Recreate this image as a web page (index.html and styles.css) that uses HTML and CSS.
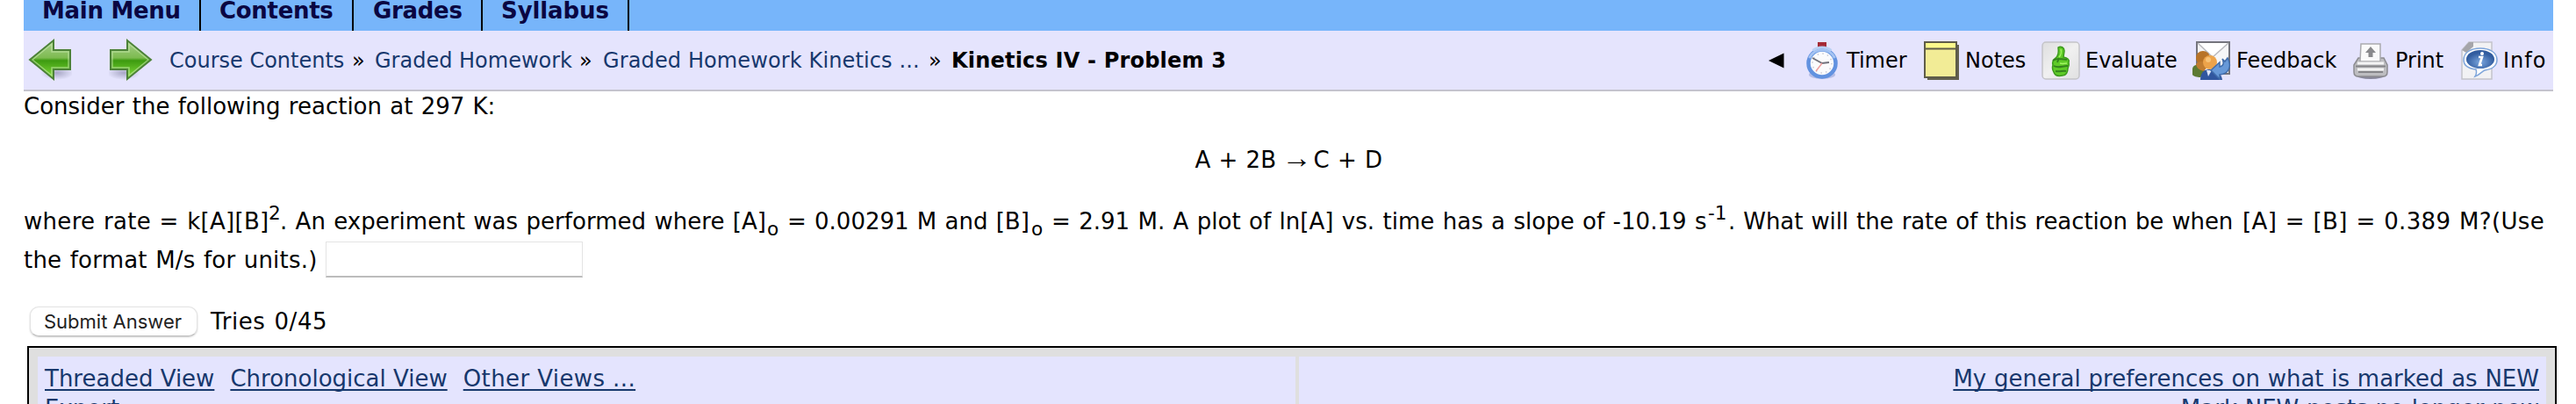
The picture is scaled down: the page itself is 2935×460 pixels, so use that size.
FILE: index.html
```
<!DOCTYPE html>
<html lang="en">
<head>
<meta charset="utf-8">
<title>Kinetics IV - Problem 3</title>
<link rel="stylesheet" href="styles.css">
</head>
<body>
<ul class="tabs">
  <li class="tab tab-menu">Main Menu</li>
  <li class="tab tab-contents">Contents</li>
  <li class="tab tab-grades">Grades</li>
  <li class="tab tab-syllabus">Syllabus</li>
</ul>
<nav class="bar">
  <div class="arrows">
    <svg width="50" height="52" viewBox="0 0 50 52">
      <defs>
        <linearGradient id="green" x1="0" y1="0" x2="0" y2="1">
          <stop offset="0" stop-color="#a9cf8e"/><stop offset=".45" stop-color="#7dbb50"/><stop offset=".52" stop-color="#3d9a10"/><stop offset="1" stop-color="#86e03c"/>
        </linearGradient>
        <radialGradient id="shade"><stop offset="0" stop-color="#777799" stop-opacity=".55"/><stop offset="1" stop-color="#777799" stop-opacity="0"/></radialGradient>
      </defs>
      <ellipse cx="33" cy="40" rx="19" ry="8" fill="url(#shade)"/>
      <path d="M2 25 29 3v11h19v22H29v11z" fill="url(#green)" stroke="#4c8238" stroke-width="2"/>
      <path d="M5 25 27 7v9h19v18H27v9z" fill="none" stroke="#c5e8a8" stroke-opacity=".6" stroke-width="1.5"/>
    </svg>
    <svg width="50" height="52" viewBox="0 0 50 52">
      <ellipse cx="17" cy="40" rx="19" ry="8" fill="url(#shade)"/>
      <path d="M48 25 21 3v11H2v22h19v11z" fill="url(#green)" stroke="#4c8238" stroke-width="2"/>
      <path d="M45 25 23 7v9H4v18h19v9z" fill="none" stroke="#c5e8a8" stroke-opacity=".6" stroke-width="1.5"/>
    </svg>
  </div>
  <div class="crumbs">
    <a class="crumb-course">Course Contents</a><span class="sep">»</span>
    <a class="crumb-hw">Graded Homework</a><span class="sep sep-2">»</span>
    <a class="crumb-kin">Graded Homework Kinetics ...</a><span class="sep">»</span>
    <b>Kinetics IV - Problem 3</b>
  </div>
  <div class="tools">
    <svg class="collapse" width="18" height="18" viewBox="0 0 18 18"><path d="M0 9 17.500 .5v17z"/></svg>
    <svg class="ico-timer" width="38" height="44" viewBox="0 0 38 44">
      <rect x="14" y="1" width="10" height="7" fill="#a52a35"/>
      <ellipse cx="19" cy="38" rx="15" ry="5" fill="#8795cf" opacity=".5"/>
      <circle cx="19" cy="25" r="15.500" fill="#fbfbfd" stroke="#6292e0" stroke-width="4.500"/>
      <path d="M8.500 10.500A18 18 0 0 1 29.500 10.500" fill="none" stroke="#b8d0f4" stroke-width="3"/>
      <path d="M4.500 19A16 16 0 0 1 33.500 19" fill="none" stroke="#a5c3f2" stroke-width="3"/>
      <circle cx="19" cy="25" r="11" fill="none" stroke="#c9c9d2" stroke-width="1.500" stroke-dasharray="1.500 4.260"/>
      <path d="M8 19 19 25l8-1" fill="none" stroke="#71717b" stroke-width="1.800"/>
      <path d="m19 25-7 9" stroke="#ee9c9c" stroke-width="1.500"/>
    </svg>
    <span class="t-timer">Timer</span>
    <svg class="ico-notes" width="40" height="44" viewBox="0 0 40 44">
      <path d="M4 4h36v40H4z" fill="#62604f"/>
      <rect x="1" y="1" width="36" height="40" fill="#f2ec96" stroke="#5e5c49" stroke-width="2"/>
      <path d="M2 2h34v6H2z" fill="#fcfa8c"/><path d="M1 8.500h36" stroke="#5e5c49" stroke-width="2"/>
    </svg>
    <span class="t-notes">Notes</span>
    <svg class="ico-eval" width="44" height="44" viewBox="0 0 44 44">
      <defs><linearGradient id="tile" x1="0" y1="0" x2="1" y2="1"><stop offset="0" stop-color="#dededf"/><stop offset=".5" stop-color="#f0f0f0"/><stop offset="1" stop-color="#e0e0e1"/></linearGradient></defs>
      <rect x="1" y="1" width="42" height="42" rx="4" fill="url(#tile)" stroke="#c4c4c8" stroke-width="1.500"/>
      <path d="M19 7c3-2 7 0 7 4l-1 7c5 1 7 3 6 6 1 3 0 5-1 7 0 4-2 8-6 8-5 1-9 0-10-4-2-3-2-5-1-8-1-4 0-6 3-8 3-2 4-5 3-12z" fill="#5fcb27" stroke="#3c9a1c" stroke-width="1.500"/>
      <path d="M13 22c4-3 9-2 16-1M14 28c5 3 10 0 16 0M16 34c5 1 9-1 12 0M20 19l-2 5" fill="none" stroke="#34831d" stroke-width="2"/>
      <path d="M22 9c1 3 0 7-2 9M21 25c3 1 5 0 8 0" fill="none" stroke="#a2f463" stroke-width="1.500"/>
    </svg>
    <span class="t-eval">Evaluate</span>
    <svg class="ico-feed" width="44" height="44" viewBox="0 0 44 44">
      <path d="M5 1h37v36H5z" fill="#f6f6f7" stroke="#74747c" stroke-width="2"/>
      <path d="m6 2 17 16L41 2" fill="#fff" stroke="#b9b9bd" stroke-width="1.500"/>
      <path d="M0 38V31c1-5 7-5 12-3l3 8-6 5c-4 0-8-1-9-3z" fill="#5c7a32"/>
      <circle cx="12" cy="19" r="8" fill="#b87327"/>
      <path d="M4 26c4-5 10-3 14 2l-5 6c-5-1-8-3-9-8z" fill="#c07c30"/>
      <path d="M9 44c0-8 4-12 10-12 8 0 14 4 15 12z" fill="#31579f"/><path d="m16 33 2 7 4-7z" fill="#dce5f8"/>
      <circle cx="20" cy="24" r="8" fill="#eca34a"/><circle cx="18" cy="21" r="3" fill="#f8c276"/>
      <path d="M21 33 31 24v5c5-1 5-5 3-9l3 3 3-4c5 9 2 18-9 19v5z" fill="#6799d8" stroke="#3f6cab" stroke-width="1.500"/>
    </svg>
    <span class="t-feed">Feedback</span>
    <svg class="ico-print" width="40" height="44" viewBox="0 0 40 44">
      <ellipse cx="20" cy="39" rx="16" ry="4" fill="#686878" opacity=".75"/>
      <path d="M6 19h29l4 8v8c0 3-2 5-5 5H6c-3 0-5-2-5-5v-8z" fill="#bdbdc0" stroke="#8c8c90" stroke-width="1.500"/>
      <path d="M9 3h22v20H8z" fill="#fafafa" stroke="#aaaaae" stroke-width="1.500"/>
      <path d="m20 6 6 7h-3.500v5h-5v-5H14z" fill="#89898c"/>
      <path d="M5 25h30M5 32h30" stroke="#f4f4f4" stroke-width="3"/>
      <path d="M3 28.500h34M6 35h28" stroke="#858588" stroke-width="2"/>
    </svg>
    <span class="t-print">Print</span>
    <svg class="ico-info" width="42" height="44" viewBox="0 0 42 44">
      <defs><radialGradient id="bubble" cx=".5" cy=".65"><stop offset="0" stop-color="#7ba7df"/><stop offset="1" stop-color="#315c9f"/></radialGradient></defs>
      <path d="M9 1h26v42H1V10z" fill="#f2f2f4" stroke="#c3c3ca" stroke-width="1.500"/><path d="m1 10 8-9h5v5L6 13z" fill="#a5a5aa"/>
      <path d="M22 8c11 0 19 5 19 13 0 7-6 11-14 12-3 1-5 5-11 7 2-3 2-5 1-8C8 31 3 27 3 21 3 13 11 8 22 8z" fill="#fff" stroke="#7ea5da" stroke-width="1.500"/>
      <ellipse cx="22" cy="20.500" rx="16" ry="10.500" fill="url(#bubble)"/>
      <circle cx="24" cy="14" r="2" fill="#fff"/><path d="M20 18h4l-3 9h3" fill="none" stroke="#fff" stroke-width="2.600"/>
    </svg>
    <span class="t-info">Info</span>
  </div>
</nav>
<main class="problem">
  <p class="intro">Consider the following reaction at 297 K:</p>
  <p class="equation"><span class="left">A + 2B</span><span class="arrow">→</span><span class="right">C + D</span></p>
  <p class="rate"><span class="r1">where rate = k[A][B]</span><sup class="two">2</sup><span class="r2">. An experiment was performed where [A]</span><sub>o</sub><span class="r3">= 0.00291 M and [B]</span><sub>o</sub><span class="r4">= 2.91 M. A plot of ln[A] vs. time has a slope of -10.19 s</span><sup class="inv">-1</sup><span class="r5">. What will the rate of this reaction be when</span><span class="r6">[A] = [B] = 0.389 M?(Use</span></p>
  <div class="answer"><span class="units">the format M/s for units.)</span><input class="field" type="text"></div>
  <div class="submit"><button class="send">Submit Answer</button><span class="tries">Tries 0/45</span></div>
</main>
<section class="discussion">
  <div class="cell views">
    <div class="links"><a>Threaded View</a><a>Chronological View</a><a class="other">Other Views ...</a></div>
    <div class="links"><a>Export</a></div>
  </div>
  <div class="cell prefs">
    <div class="links"><a>My general preferences on what is marked as NEW</a></div>
    <div class="links"><a>Mark NEW posts no longer new</a></div>
  </div>
</section>
</body>
</html>
```
FILE: styles.css
```
* { box-sizing: border-box; }
html { overflow: hidden; }
body { margin: 0; height: 460px; overflow: hidden; background: #fff; color: #000; font: 26px/34px "DejaVu Sans", Verdana, sans-serif; }
p, ul { margin: 0; padding: 0; }
svg { display: block; flex: none; }

.tabs { display: flex; list-style: none; width: 2882px; height: 35px; margin-left: 27px; background: #77b5fa; }
.tab { height: 35px; padding-left: 21px; border-right: 2px solid #000; font-weight: bold; line-height: 24px; color: #0a0642; letter-spacing: -.3px; white-space: nowrap; }
.tab-menu { width: 202px; }
.tab-contents { width: 174px; }
.tab-grades { width: 147px; padding-left: 22px; }
.tab-syllabus { width: 167px; letter-spacing: -.1px; }

.bar { display: flex; align-items: center; width: 2882px; height: 69px; margin-left: 27px; padding-left: 5px; border-bottom: 2px solid #c4c3ce; background: #e5e4fd; font-size: 24px; white-space: nowrap; }
.arrows { display: flex; gap: 42px; width: 161px; }
.crumbs { display: flex; flex: 1; }
.crumbs a { color: #17386d; }
.crumb-course { width: 208px; }
.crumb-hw { width: 233px; }
.crumb-kin { width: 371px; letter-spacing: .12px; }
.sep { width: 26px; }
.sep-2 { width: 27px; }
.crumbs b { letter-spacing: .2px; }
.tools { display: flex; align-items: center; }
.collapse { margin-right: 24px; }
.ico-timer { margin-right: 9px; }
.t-timer { width: 88px; }
.ico-notes { margin-right: 7px; }
.t-notes { width: 87px; }
.ico-eval { margin-right: 6px; }
.t-eval { width: 122px; }
.ico-feed { margin-right: 6px; }
.t-feed { width: 133px; }
.ico-print { margin-right: 8px; }
.t-print { width: 75px; }
.ico-info { margin-right: 6px; }
.t-info { width: 57px; letter-spacing: 1px; }

.problem { margin-left: 27px; white-space: nowrap; word-spacing: 1px; }
.equation { display: flex; justify-content: center; width: 2882px; height: 40px; margin-top: 24px; line-height: 40px; }
.left { width: 99px; }
.arrow { width: 36px; font-family: "Liberation Serif", serif; font-size: 34px; line-height: 36px; }
.right { width: 78px; }
.rate { display: flex; height: 44px; margin-top: 28px; line-height: 44px; }
.rate sup, .rate sub { font-size: 21.600px; line-height: 44px; vertical-align: baseline; }
.rate sup { margin-top: -9px; }
.rate sub { width: 23px; margin-top: 9px; }
.r1 { width: 279px; letter-spacing: .3px; }
.two { width: 13px; }
.r2 { width: 555px; letter-spacing: .04px; }
.r3 { width: 278px; }
.r4 { width: 748px; letter-spacing: .045px; }
.inv { width: 23px; }
.r5 { width: 586px; letter-spacing: -.1px; }
.r6 { letter-spacing: .36px; }
.answer { display: flex; height: 42px; margin-top: 1px; line-height: 42px; }
.units { width: 344px; letter-spacing: .2px; }
.field { width: 293px; height: 41px; border: 1px solid #e4e4e4; border-bottom: 2px solid #bcbcbc; background: #fff; }
.submit { display: flex; height: 34px; margin: 32px 0 0 7px; }
.send { width: 191px; height: 34px; padding: 0 2px 0 0; border: 1px solid #e3e3e3; border-bottom-color: #bdbdbd; border-radius: 10px; background: #fff; box-shadow: 0 1px 2px #ccc; color: #222; font: 22px Inter, sans-serif; word-spacing: 0; }
.tries { margin-left: 15px; letter-spacing: .6px; }

.discussion { display: flex; gap: 4px; width: 2882px; height: 80px; margin: 11px 0 0 31px; padding: 10px 10px 0; border: 2px solid #000; background: #dfdfdf; }
.cell { padding: 8px 8px 0; background: #e4e4fe; white-space: nowrap; }
.views { width: 1433px; }
.prefs { flex: 1; text-align: right; word-spacing: .5px; }
.links { height: 34px; line-height: 34px; }
.links a { margin-right: 18px; color: #17386d; text-decoration: underline; text-decoration-thickness: 2px; text-underline-offset: 3px; text-decoration-skip-ink: none; }
.links a:last-child { margin-right: 0; }
.links .other { letter-spacing: .4px; }
```
